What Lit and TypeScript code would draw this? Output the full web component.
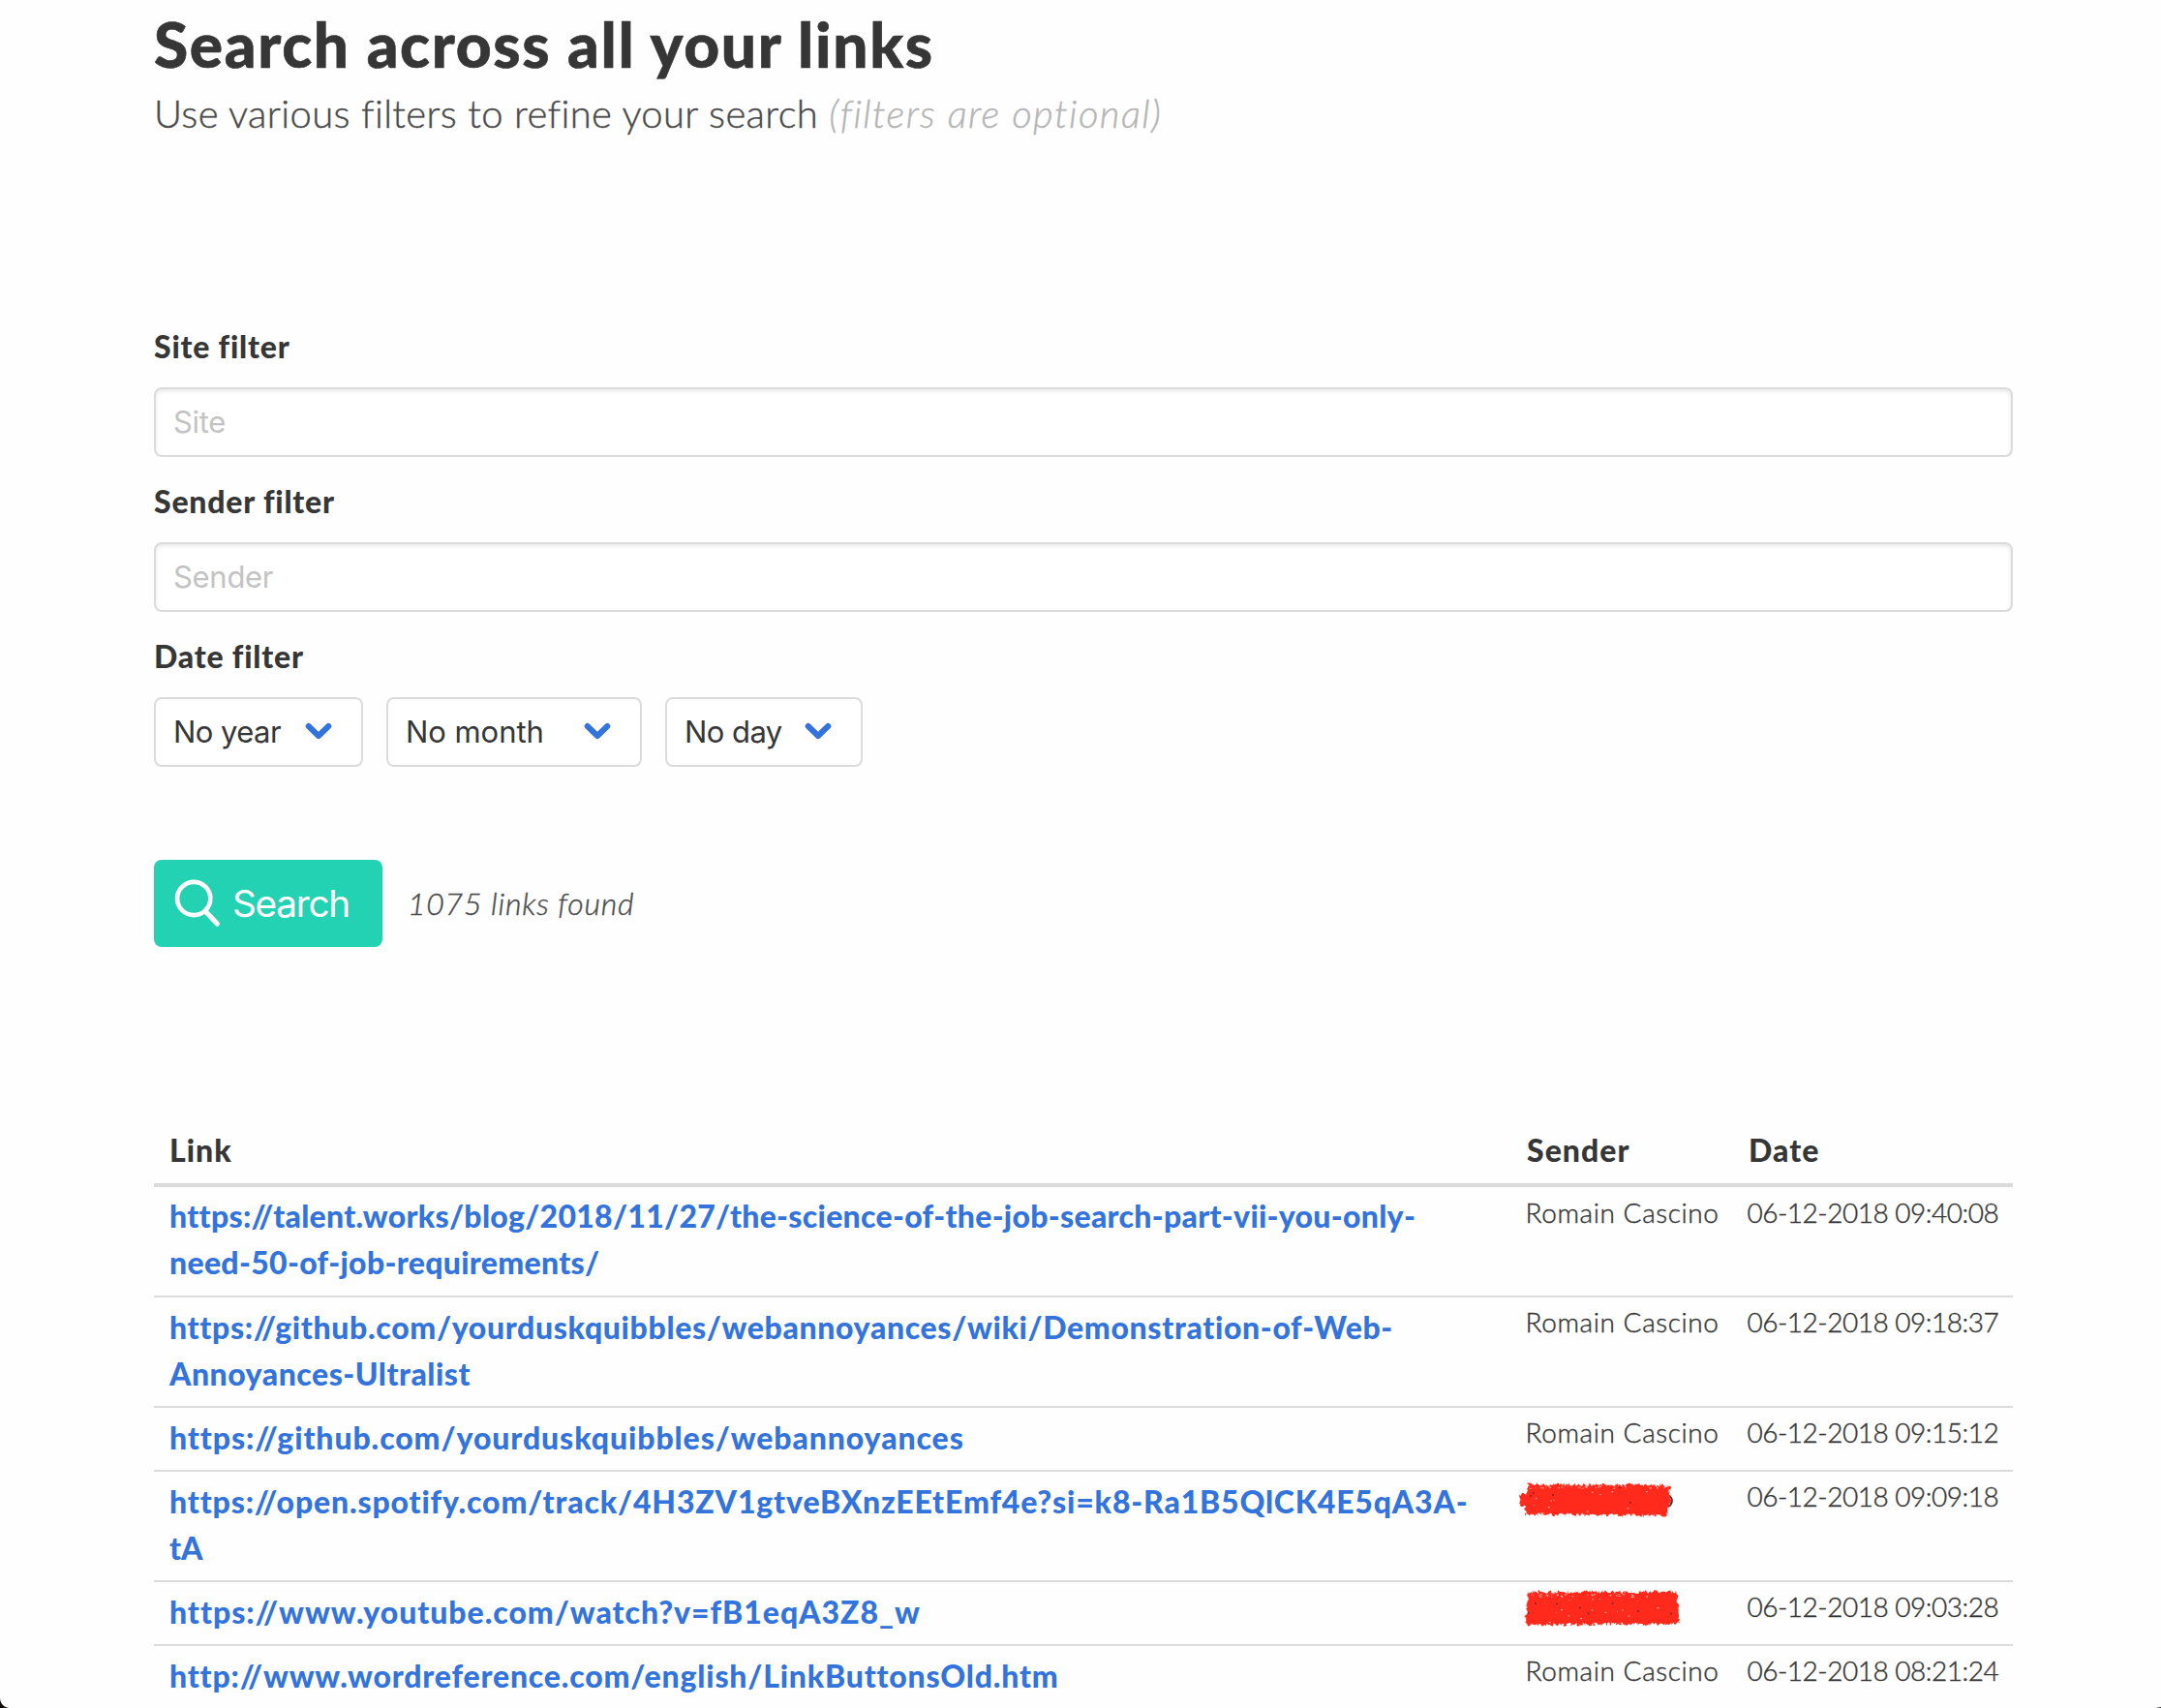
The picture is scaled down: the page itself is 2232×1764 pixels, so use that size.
import { LitElement, html, css, svg } from "lit";
import { customElement } from "lit/decorators.js";
import { styleMap } from "lit/directives/style-map.js";

type Line = [text: string, tracking: number];
interface LinkRow {
  lines: Line[];
  sender: string | number;
  date: string;
}

const ROWS: LinkRow[] = [
  {
    lines: [
      ["https://talent.works/blog/2018/11/27/the-science-of-the-job-search-part-vii-you-only-", 0.279],
      ["need-50-of-job-requirements/", 0.3],
    ],
    sender: "Romain Cascino",
    date: "06-12-2018 09:40:08",
  },
  {
    lines: [
      ["https://github.com/yourduskquibbles/webannoyances/wiki/Demonstration-of-Web-", 0.644],
      ["Annoyances-Ultralist", 0.5],
    ],
    sender: "Romain Cascino",
    date: "06-12-2018 09:18:37",
  },
  {
    lines: [["https://github.com/yourduskquibbles/webannoyances", 0.9]],
    sender: "Romain Cascino",
    date: "06-12-2018 09:15:12",
  },
  {
    lines: [
      ["https://open.spotify.com/track/4H3ZV1gtveBXnzEEtEmf4e?si=k8-Ra1B5QlCK4E5qA3A-", 0.831],
      ["tA", 0],
    ],
    sender: 0,
    date: "06-12-2018 09:09:18",
  },
  {
    lines: [["https://www.youtube.com/watch?v=fB1eqA3Z8_w", 0.953]],
    sender: 1,
    date: "06-12-2018 09:03:28",
  },
  {
    lines: [["http://www.wordreference.com/english/LinkButtonsOld.htm", 0.8]],
    sender: "Romain Cascino",
    date: "06-12-2018 08:21:24",
  },
];

interface Scribble {
  corners: [number, number][];
  specks: [number, number][];
}

const SCRIBBLES: Scribble[] = [
  {
    corners: [[18, 13], [165, 14], [164, 22], [166, 30], [163, 36], [161, 45], [16, 44], [15, 36], [10, 34], [9, 24], [17, 23]],
    specks: [[21, 25], [44, 24], [113, 16.5], [124, 32], [24, 22]],
  },
  {
    corners: [[18, 12], [172, 12], [172, 20], [174, 27], [173, 34], [175, 45], [16, 46], [15, 38], [17, 31]],
    specks: [[26, 24], [48, 24.5], [105.5, 24], [72, 28.5], [80.5, 34.5], [132, 32], [166, 34.5], [18.5, 34]],
  },
];

const noise = (seed: number) => () => {
  seed = (seed * 1664525 + 1013904223) % 4294967296;
  return seed / 4294967296;
};

/** Rough crayon outline: each edge is walked in small steps and jittered. */
function roughPath(corners: [number, number][], rnd: () => number): string {
  const pts: string[] = [];
  corners.forEach(([x0, y0], i) => {
    const [x1, y1] = corners[(i + 1) % corners.length];
    const steps = Math.max(1, Math.round(Math.hypot(x1 - x0, y1 - y0) / 0.9));
    for (let s = 0; s < steps; s++) {
      const t = s / steps;
      const jx = (rnd() - 0.5) * 3;
      const jy = (rnd() - 0.5) * 4;
      pts.push(`${(x0 + (x1 - x0) * t + jx).toFixed(1)} ${(y0 + (y1 - y0) * t + jy).toFixed(1)}`);
    }
  });
  return `M${pts.join("L")}Z`;
}

function scribble(index: number) {
  const { corners, specks } = SCRIBBLES[index];
  const rnd = noise(index * 77 + 11);
  const gaps = Array.from({ length: 46 }, () => {
    const edge = rnd() < 0.6;
    return [19 + rnd() * 143, edge ? 14 + rnd() * 3 : 18 + rnd() * 25, 0.5 + rnd() * 0.8];
  });
  return html`<svg class="scribble scribble-${index}" width="190" height="60" viewBox="0 0 190 60">
    ${index === 0
      ? svg`<path d="M163.5 24.5Q167.5 27 166.8 31Q166 35 162.5 36" fill="none" stroke="#3a3a3a" stroke-width="2"/>`
      : null}
    <path d=${roughPath(corners, rnd)} fill="#ff2a1c" />
    ${gaps.map(([x, y, r]) => svg`<rect x=${x} y=${y} width=${r * 1.6} height=${r} fill="#ffb3ad"/>`)}
    ${specks.map(([x, y]) => svg`<rect x=${x - 0.8} y=${y - 0.8} width="1.7" height="1.6" fill="#6b2a28"/>`)}
  </svg>`;
}

@customElement("app-root")
export class AppRoot extends LitElement {
  static styles = css`
    :host {
      display: block;
      font-family: Lato, "Liberation Sans", sans-serif;
      font-size: 32px;
      line-height: 48px;
      color: #363636;
      font-variant-ligatures: none;
    }
    * { box-sizing: border-box; margin: 0; }
    .page {
      position: relative;
      height: 1764px;
      overflow: hidden;
      background: #fefefe;
      padding: 10px 153px 0 159px;
      display: flex;
      flex-direction: column;
    }
    .title {
      font-size: 64px; line-height: 72px; font-weight: 900; letter-spacing: 1.65px; white-space: nowrap;
      -webkit-text-stroke: 0.6px currentColor;
    }
    .subtitle {
      margin-top: 10px; font-size: 40px; line-height: 50px; font-weight: 300; color: #4a4a4a;
      letter-spacing: 0.33px; white-space: nowrap; -webkit-text-stroke: 0.4px currentColor;
    }
    .hint { color: #b5b5b5; letter-spacing: 1.4px; margin-left: 0; }
    .filters { margin-top: 192px; display: flex; flex-direction: column; gap: 22px; }
    .label { display: block; height: 66px; font-weight: 900; letter-spacing: 0.8px; }
    .box {
      height: 72px; border: 2px solid #dbdbdb; border-radius: 8px; background: #fff;
      display: flex; align-items: center; padding: 0 18px;
      font-family: Inter, "Liberation Sans", sans-serif; font-size: 31px; white-space: nowrap;
    }
    .input { color: #c3c3c3; letter-spacing: -0.3px; box-shadow: inset 0 2px 4px rgba(10, 10, 10, 0.1); }
    .selects { display: flex; gap: 24px; }
    .select { letter-spacing: -0.55px; justify-content: space-between; padding-right: 33px; }
    .year { width: 216px; }
    .month { width: 264px; letter-spacing: -0.05px; }
    .day { width: 204px; }
    .chevron { display: block; flex: none; margin-right: -3px; }
    .actions { margin-top: 96px; display: flex; align-items: center; gap: 26px; }
    .search {
      width: 236px; height: 90px; border: 0; border-radius: 8px; background: #23d1b3; color: #fff;
      display: flex; align-items: center; gap: 11px; padding: 0 0 2px 20px;
      font: 400 38.8px Inter, "Liberation Sans", sans-serif; letter-spacing: -1.3px;
    }
    .glass { display: block; flex: none; }
    .found {
      font-style: italic; font-weight: 300; color: #4a4a4a; letter-spacing: 0.75px;
      -webkit-text-stroke: 0.4px currentColor;
    }
    .table { margin-top: 180px; display: flex; flex-direction: column; }
    .row {
      display: grid; grid-template-columns: 1400px 228px 1fr; padding: 0 0 0 16px;
      border-bottom: 2px solid #dbdbdb; white-space: nowrap; align-items: start;
    }
    .head { height: 68px; border-bottom-width: 4px; padding-top: 6px; font-weight: 900; letter-spacing: 1.03px; }
    .head .cell-title { padding-left: 2px; }
    .head .cell-date { padding-left: 3px; }
    .link { color: #3273dc; font-weight: 900; padding: 7px 0 9px; text-decoration: none; }
    .line { display: table; }
    .meta {
      position: relative; font-size: 28px; line-height: 42px; padding-top: 4px; font-weight: 300;
      -webkit-text-stroke: 0.4px currentColor;
    }
    .sender { letter-spacing: 0.58px; min-height: 46px; padding-left: 0.5px; }
    .date { letter-spacing: -0.5px; padding-left: 1.5px; }
    .first .link { padding: 6px 0 10px; }
    .first .meta { padding-top: 5px; }
    .scribble { position: absolute; left: -15px; top: 0; }
    .scribble-1 { top: -2px; }
    .corner {
      position: absolute; left: 0; bottom: 0; width: 9px; height: 10px;
      background: radial-gradient(circle at 10px 0, transparent 9.4px, #120a04 10.4px);
    }
    .corner-right {
      position: absolute; right: 0; bottom: 0; width: 4px; height: 1px;
      background: linear-gradient(90deg, #b8b8b8, #222);
    }
  `;

  private select(kind: string, text: string) {
    return html`<div class="box select ${kind}">
      <span>${text}</span>
      <svg class="chevron" width="28" height="20" viewBox="0 0 28 20">
        <path d="M3.7 4L14 14L24.3 4" fill="none" stroke="#3273dc" stroke-width="6" stroke-linecap="round" stroke-linejoin="round" />
      </svg>
    </div>`;
  }

  private field(label: string, placeholder: string) {
    return html`<div>
      <label class="label">${label}</label>
      <div class="box input">${placeholder}</div>
    </div>`;
  }

  render() {
    return html`<main class="page">
      <h1 class="title">Search across all your links</h1>
      <p class="subtitle">Use various filters to refine your search <em class="hint">(filters are optional)</em></p>
      <section class="filters">
        ${this.field("Site filter", "Site")} ${this.field("Sender filter", "Sender")}
        <div>
          <label class="label">Date filter</label>
          <div class="selects">
            ${this.select("year", "No year")} ${this.select("month", "No month")} ${this.select("day", "No day")}
          </div>
        </div>
      </section>
      <div class="actions">
        <button class="search">
          <svg class="glass" width="50" height="52" viewBox="0 0 50 52" fill="none" stroke="#fff" stroke-linecap="round">
            <circle cx="21.2" cy="22" r="17.1" stroke-width="4.6" />
            <path d="M33.5 35.5L45.3 48" stroke-width="5.2" />
          </svg>
          <span>Search</span>
        </button>
        <span class="found">1075 links found</span>
      </div>
      <section class="table">
        <div class="row head">
          <span>Link</span><span class="cell-title">Sender</span><span class="cell-date">Date</span>
        </div>
        ${ROWS.map(
          (row, i) => html`<div class="row ${i === 0 ? "first" : ""}">
            <a class="link">${row.lines.map(
              ([text, tracking]) =>
                html`<span class="line" style=${styleMap({ letterSpacing: `${tracking}px` })}>${text}</span>`
            )}</a>
            <div class="meta sender">${typeof row.sender === "number" ? scribble(row.sender) : row.sender}</div>
            <div class="meta date">${row.date}</div>
          </div>`
        )}
      </section>
      <i class="corner"></i><i class="corner-right"></i>
    </main>`;
  }
}
